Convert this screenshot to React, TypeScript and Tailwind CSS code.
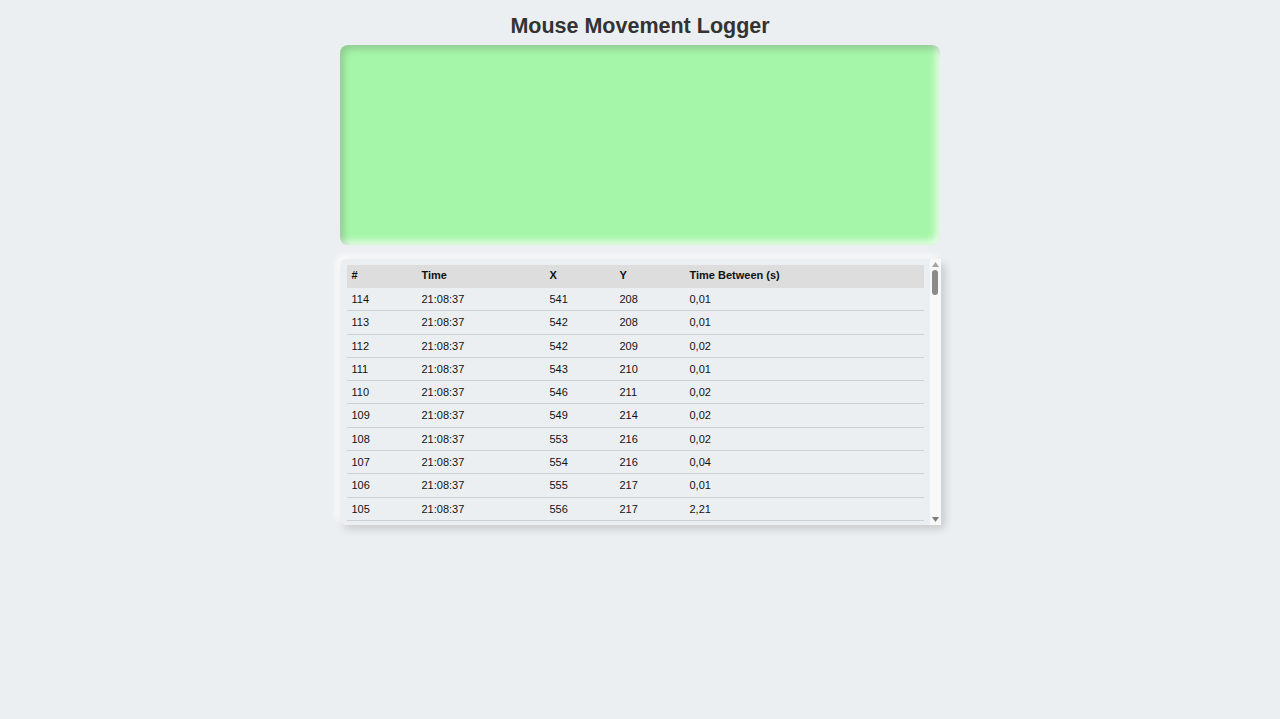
import React from "react";

type Row = { n: number; time: string; x: number; y: number; dt: string };

const rows: Row[] = [
  { n: 114, time: "21:08:37", x: 541, y: 208, dt: "0,01" },
  { n: 113, time: "21:08:37", x: 542, y: 208, dt: "0,01" },
  { n: 112, time: "21:08:37", x: 542, y: 209, dt: "0,02" },
  { n: 111, time: "21:08:37", x: 543, y: 210, dt: "0,01" },
  { n: 110, time: "21:08:37", x: 546, y: 211, dt: "0,02" },
  { n: 109, time: "21:08:37", x: 549, y: 214, dt: "0,02" },
  { n: 108, time: "21:08:37", x: 553, y: 216, dt: "0,02" },
  { n: 107, time: "21:08:37", x: 554, y: 216, dt: "0,04" },
  { n: 106, time: "21:08:37", x: 555, y: 217, dt: "0,01" },
  { n: 105, time: "21:08:37", x: 556, y: 217, dt: "2,21" },
];

function Scrollbar() {
  return (
    <div className="w-[11px] self-stretch bg-[#f8f8f8] flex flex-col items-center">
      <svg width="7" height="5" viewBox="0 0 7 5" className="mt-[3px]">
        <path d="M3.5 0 L7 5 L0 5 Z" fill="#a3a3a3" />
      </svg>
      <div className="mt-[3px] w-[6px] h-[25px] rounded-full bg-[#8a8a8a]" />
      <div className="flex-1" />
      <svg width="7" height="5" viewBox="0 0 7 5" className="mb-[3px]">
        <path d="M0 0 L7 0 L3.5 5 Z" fill="#7d7d7d" />
      </svg>
    </div>
  );
}

export default function App() {
  return (
    <div
      className="min-h-[719px] w-full bg-[#eceff1] flex flex-col items-center text-[#333]"
      style={{ fontFamily: '"Liberation Sans", Arial, sans-serif' }}
    >
      <h1 className="mt-[13px] text-[21.5px] leading-[26px] font-bold text-[#333]">
        Mouse Movement Logger
      </h1>

      <div className="mt-[6px] w-[600px] h-[200px] rounded-[8px] bg-[#a6f6a9] shadow-[inset_4px_4px_7px_rgba(60,60,60,0.22),inset_-4px_-4px_7px_rgba(255,255,255,0.75)]" />

      <div className="mt-[14px] w-[601px] rounded-[6px] bg-[#eceff1] shadow-[4px_4px_8px_rgba(0,0,0,0.16),-3px_-3px_7px_rgba(255,255,255,0.9)] flex pl-[7px]">
        <div className="w-[577px] pt-[6px] pb-[4px]">
          <table className="w-full border-collapse text-[11px] text-[#111]">
            <thead>
              <tr className="bg-[#dddddd]">
                <th className="w-[70px] px-[5px] pt-[4px] pb-[6px] leading-[13px] text-left font-bold">#</th>
                <th className="w-[128px] px-[5px] pt-[4px] pb-[6px] leading-[13px] text-left font-bold">Time</th>
                <th className="w-[70px] px-[5px] pt-[4px] pb-[6px] leading-[13px] text-left font-bold">X</th>
                <th className="w-[70px] px-[5px] pt-[4px] pb-[6px] leading-[13px] text-left font-bold">Y</th>
                <th className="px-[5px] pt-[4px] pb-[6px] leading-[13px] text-left font-bold">Time Between (s)</th>
              </tr>
            </thead>
            <tbody>
              {rows.map((r) => (
                <tr key={r.n} className="border-b border-[#cfd2d4]">
                  <td className="px-[5px] py-[5px] leading-[12.3px]">{r.n}</td>
                  <td className="px-[5px] py-[5px] leading-[12.3px]">{r.time}</td>
                  <td className="px-[5px] py-[5px] leading-[12.3px]">{r.x}</td>
                  <td className="px-[5px] py-[5px] leading-[12.3px]">{r.y}</td>
                  <td className="px-[5px] py-[5px] leading-[12.3px]">{r.dt}</td>
                </tr>
              ))}
            </tbody>
          </table>
        </div>
        <div className="w-[6px]" />
        <Scrollbar />
      </div>
    </div>
  );
}
